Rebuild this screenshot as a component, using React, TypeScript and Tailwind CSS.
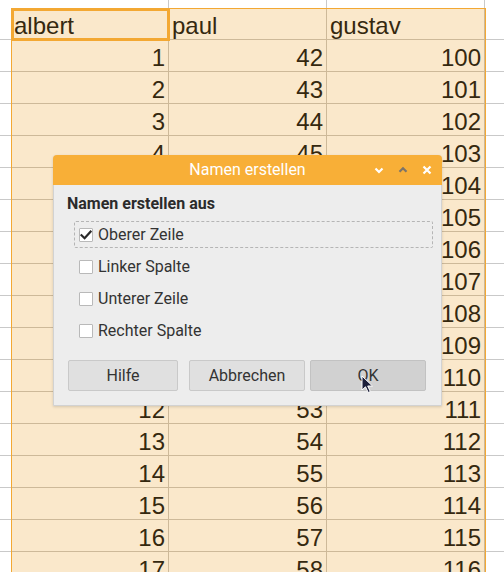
import React from "react";

const rows: { a: string; b: string; c: string; header?: boolean }[] = [
  { a: "albert", b: "paul", c: "gustav", header: true },
  ...Array.from({ length: 17 }, (_, i) => ({
    a: String(i + 1),
    b: String(42 + i),
    c: String(100 + i),
  })),
];

function Cell({ text, header, w }: { text: string; header?: boolean; w: string }) {
  return (
    <div
      className={`${w} h-8 shrink-0 border-r border-b border-[#cdb999] bg-[#fae8cb] px-[3px] pt-[2px] text-[24px] leading-[32px] text-[#35280f] overflow-hidden whitespace-nowrap ${
        header ? "text-left" : "text-right"
      }`}
    >
      {text}
    </div>
  );
}

function Check() {
  return (
    <span className="w-[14px] h-[14px] bg-white border border-[#b9b9b9] rounded-[1px] flex items-center justify-center shrink-0">
      <svg width="12" height="12" viewBox="0 0 12 12">
        <path d="M1.5 6.2 L4.6 9.2 L10.6 2.6" fill="none" stroke="#2a2a2a" strokeWidth="2.2" strokeLinecap="square" />
      </svg>
    </span>
  );
}

function Box() {
  return <span className="w-[14px] h-[14px] bg-white border border-[#b9b9b9] rounded-[1px] shrink-0" />;
}

export default function App() {
  return (
    <div
      className="relative w-[504px] h-[572px] overflow-hidden bg-white"
      style={{ fontFamily: "'Liberation Sans', Arial, sans-serif" }}
    >
      {/* top partial row */}
      <div className="flex h-[8px]">
        <div className="w-[11px] shrink-0" />
        <div className="w-[158px] shrink-0 border-r border-[#c9c9c9]" />
        <div className="w-[158px] shrink-0 border-r border-[#c9c9c9]" />
        <div className="w-[158px] shrink-0 border-r border-[#c9c9c9]" />
        <div className="flex-1" />
      </div>
      {rows.map((r, i) => (
        <div key={i} className="flex">
          <div className="w-[11px] h-8 shrink-0 border-b border-[#c9c9c9]" />
          <Cell text={r.a} header={r.header} w="w-[158px]" />
          <Cell text={r.b} header={r.header} w="w-[158px]" />
          <Cell text={r.c} header={r.header} w="w-[158px]" />
          <div className="flex-1 h-8 border-b border-[#c9c9c9]" />
        </div>
      ))}

      {/* selection range border */}
      <div className="absolute left-[11px] top-[8px] w-[475px] h-[600px] border border-[#f3a833] pointer-events-none" />
      {/* cell cursor */}
      <div className="absolute left-[11px] top-[8px] w-[159px] h-[33px] border-[3px] border-[#f3a833] pointer-events-none" />

      {/* dialog */}
      <div
        className="absolute left-[53px] top-[155px] w-[389px] h-[251px] bg-[#ededed] border border-[#d2d2d2] rounded-t-[4px] shadow-[0_1px_3px_rgba(0,0,0,0.15)] flex flex-col"
        style={{ fontFamily: "Roboto, 'Noto Sans', sans-serif" }}
      >
        <div className="h-[30px] -mx-px -mt-px bg-[#f8af37] rounded-t-[4px] relative flex items-center justify-center shrink-0">
          <span className="text-white text-[16px]">Namen erstellen</span>
          <div className="absolute right-[10px] top-0 h-full flex items-center gap-[14px]">
            <svg width="10" height="10" viewBox="0 0 10 10">
              <path d="M1.5 3.5 L5 7 L8.5 3.5" fill="none" stroke="#fff" strokeWidth="2.2" />
            </svg>
            <svg width="10" height="10" viewBox="0 0 10 10">
              <path d="M1.5 6.8 L5 3.3 L8.5 6.8" fill="none" stroke="#7d7468" strokeWidth="2.2" />
            </svg>
            <svg width="10" height="10" viewBox="0 0 10 10">
              <path d="M1.5 1.5 L8.5 8.5 M8.5 1.5 L1.5 8.5" fill="none" stroke="#fff" strokeWidth="2.2" />
            </svg>
          </div>
        </div>
        <div className="pl-[13px] pt-[9px] text-[16px] leading-[20px] font-bold text-[#2b2b2b]">
          Namen erstellen aus
        </div>
        <div className="mt-[7px] ml-[20px] mr-[8px] flex flex-col gap-[5px] text-[16px] text-[#333]">
          <div className="h-[27px] flex items-center gap-[5px] pl-[4px] border border-dashed border-[#b5b5b5] rounded-[2px]">
            <Check />
            <span>Oberer Zeile</span>
          </div>
          <div className="h-[27px] flex items-center gap-[5px] pl-[5px]">
            <Box />
            <span>Linker Spalte</span>
          </div>
          <div className="h-[27px] flex items-center gap-[5px] pl-[5px]">
            <Box />
            <span>Unterer Zeile</span>
          </div>
          <div className="h-[27px] flex items-center gap-[5px] pl-[5px]">
            <Box />
            <span>Rechter Spalte</span>
          </div>
        </div>
        <div className="mt-[16px] ml-[14px] flex text-[16px] text-[#333]">
          <div className="w-[110px] h-[31px] flex items-center justify-center bg-[#e0e0e0] border border-[#c9c9c9] rounded-[2px]">
            Hilfe
          </div>
          <div className="ml-[11px] w-[116px] h-[31px] flex items-center justify-center bg-[#e0e0e0] border border-[#c9c9c9] rounded-[2px]">
            Abbrechen
          </div>
          <div className="ml-[5px] w-[116px] h-[31px] flex items-center justify-center bg-[#d1d1d1] border border-[#c2c2c2] rounded-[2px]">
            OK
          </div>
        </div>
      </div>

      {/* mouse cursor */}
      <svg className="absolute left-[361px] top-[375px]" width="14" height="20" viewBox="0 0 14 20">
        <path
          d="M1 1 L1 15 L4.5 11.8 L7.2 17.5 L9.3 16.5 L6.7 11 L11.5 11 Z"
          fill="#1d1f3a"
          stroke="#ffffff"
          strokeWidth="1"
          strokeLinejoin="round"
        />
      </svg>
    </div>
  );
}
